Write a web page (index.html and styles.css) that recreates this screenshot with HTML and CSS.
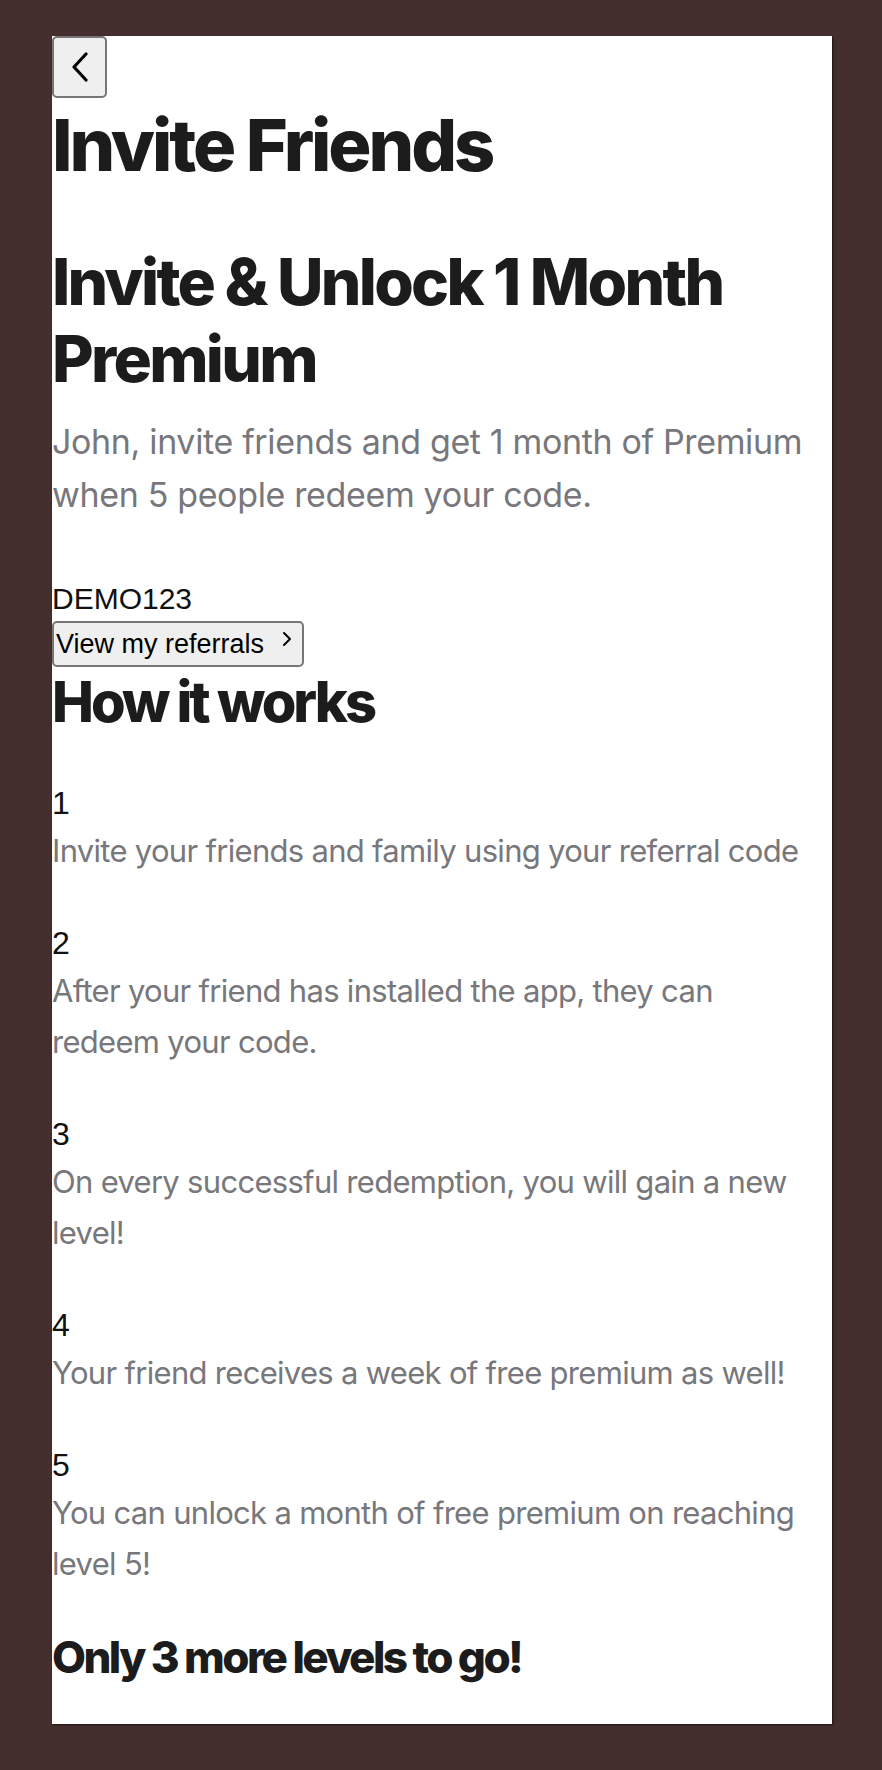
FILE: index.html
```html
<!DOCTYPE html>
<html lang="en">
<head>
<meta charset="utf-8">
<title>Invite Friends</title>
<link rel="stylesheet" href="styles.css">
</head>
<body>
<div class="screen">
  <button class="back-btn" aria-label="Back">
    <svg width="20" height="30" viewBox="0 0 20 30"><path d="M16 2 L4 15 L16 28" fill="none" stroke="#000" stroke-width="3.2" stroke-linecap="round" stroke-linejoin="round"/></svg>
  </button>
  <h1 class="title">Invite Friends</h1>
  <h2 class="promo-title">Invite &amp; Unlock 1 Month Premium</h2>
  <p class="promo-sub">John, invite friends and get 1 month of Premium when 5 people redeem your code.</p>
  <div class="code">DEMO123</div>
  <button class="referrals-btn">View my referrals <svg class="chev" width="12" height="16" viewBox="0 0 12 16"><path d="M3 2 L9 8 L3 14" fill="none" stroke="#000" stroke-width="2" stroke-linecap="round" stroke-linejoin="round"/></svg></button>
  <h2 class="section-title">How it works</h2>
  <ol class="steps">
    <li class="step"><div class="step-num">1</div><p class="step-text">Invite your friends and family using your referral code</p></li>
    <li class="step"><div class="step-num">2</div><p class="step-text">After your friend has installed the app, they can redeem your code.</p></li>
    <li class="step"><div class="step-num">3</div><p class="step-text">On every successful redemption, you will gain a new level!</p></li>
    <li class="step"><div class="step-num">4</div><p class="step-text">Your friend receives a week of free premium as well!</p></li>
    <li class="step"><div class="step-num">5</div><p class="step-text">You can unlock a month of free premium on reaching level 5!</p></li>
  </ol>
  <h3 class="levels">Only 3 more levels to go!</h3>
</div>
</body>
</html>
```
FILE: styles.css
```css
html, body {
  margin: 0;
  padding: 0;
}
body {
  background: #442f2e;
  padding: 36px 0 0 52px;
  height: 1770px;
  box-sizing: border-box;
  overflow: hidden;
}
.screen {
  width: 780px;
  height: 1688px;
  box-sizing: border-box;
  padding-right: 16px;
  background: #fff;
  box-shadow: 1px 1px 2px rgba(0,0,0,0.6);
  font-family: "Inter", "Liberation Sans", sans-serif;
  color: #1c1c1c;
  overflow: hidden;
}
.back-btn {
  display: flex;
  align-items: center;
  justify-content: center;
  width: 55px;
  height: 62px;
  padding: 0;
  margin: 0;
  background: #efefef;
  border: 2px solid #767676;
  border-radius: 5px;
}
.title {
  margin: 4px 0 0;
  font-size: 72px;
  line-height: 86px;
  font-weight: 800;
  letter-spacing: -3.1px;
}
.promo-title {
  margin: 55px 0 0;
  font-size: 64px;
  line-height: 77px;
  font-weight: 800;
  letter-spacing: -2.7px;
}
.promo-sub {
  margin: 18px 0 0;
  font-size: 34px;
  line-height: 53px;
  color: #77777c;
  letter-spacing: -0.35px;
}
.code {
  margin: 62px 0 0;
  font-family: "Liberation Sans", Arial, sans-serif;
  font-size: 30px;
  line-height: 32px;
  color: #111;
}
.referrals-btn {
  display: flex;
  align-items: center;
  margin: 6px 0 0;
  width: 252px;
  height: 46px;
  padding: 0 0 0 2px;
  background: #efefef;
  border: 2px solid #767676;
  border-radius: 5px;
  font-family: "Liberation Sans", Arial, sans-serif;
  font-size: 27px;
  color: #000;
}
.chev {
  margin-left: 17px;
  margin-top: -10px;
}
.section-title {
  margin: 0;
  font-size: 56px;
  line-height: 70px;
  font-weight: 800;
  letter-spacing: -3px;
}
.steps {
  list-style: none;
  margin: 48px 0 0;
  padding: 0;
  display: flex;
  flex-direction: column;
  gap: 49px;
}
.step-num {
  font-family: "Liberation Sans", Arial, sans-serif;
  font-size: 32px;
  line-height: 36px;
  color: #111;
}
.step-text {
  margin: 4px 0 0;
  font-size: 31px;
  line-height: 51px;
  color: #77777c;
  letter-spacing: -0.7px;
}
.levels {
  margin: 38px 0 0;
  font-size: 44px;
  line-height: 60px;
  font-weight: 800;
  letter-spacing: -2.6px;
}
```
